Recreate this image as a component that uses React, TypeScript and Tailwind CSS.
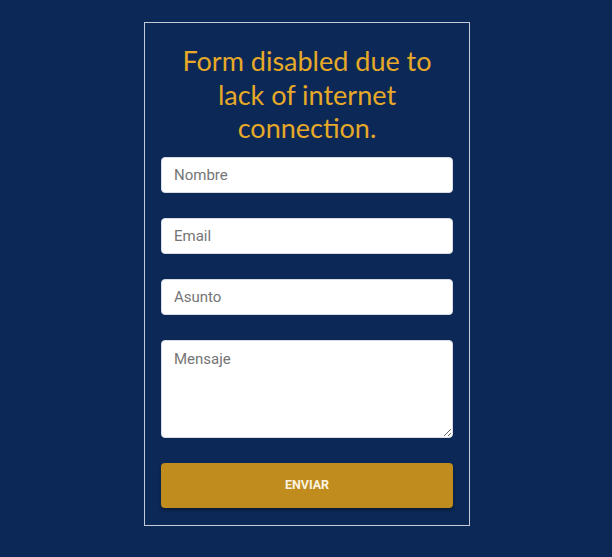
export default function App() {
  return (
    <div className="flex min-h-[557px] w-full justify-center bg-[#0b2856] pt-[22px]">
      <div className="ml-[2px] flex h-[504px] w-[326px] flex-col border border-[#c3cad8] px-4 pt-[21px]">
        <h2 className="mb-[12px] px-2 text-center font-['Lato',sans-serif] text-[27px] leading-[33.5px] text-[#e6a928]">
          Form disabled due to lack of internet connection.
        </h2>
        <form className="flex flex-col">
          <input
            disabled
            placeholder="Nombre"
            className="mb-[25px] h-[36px] w-full rounded border border-[#d8dce4] bg-white px-[12px] font-['Roboto',sans-serif] text-[15px] text-[#555] placeholder:text-[#757575]"
          />
          <input
            disabled
            placeholder="Email"
            className="mb-[25px] h-[36px] w-full rounded border border-[#d8dce4] bg-white px-[12px] font-['Roboto',sans-serif] text-[15px] text-[#555] placeholder:text-[#757575]"
          />
          <input
            disabled
            placeholder="Asunto"
            className="mb-[25px] h-[36px] w-full rounded border border-[#d8dce4] bg-white px-[12px] font-['Roboto',sans-serif] text-[15px] text-[#555] placeholder:text-[#757575]"
          />
          <textarea
            disabled
            placeholder="Mensaje"
            className="mb-[25px] h-[98px] w-full resize-y rounded border border-[#d8dce4] bg-white px-[12px] pt-[7px] font-['Roboto',sans-serif] text-[15px] text-[#555] placeholder:text-[#757575]"
          />
          <button
            type="button"
            disabled
            className="h-[45px] w-full rounded-sm bg-[#bf8c1d] font-['Roboto',sans-serif] text-[12.5px] font-bold text-[#fbf3e0] shadow-[0_2px_3px_rgba(0,0,0,0.35)]"
          >
            ENVIAR
          </button>
        </form>
      </div>
    </div>
  );
}
